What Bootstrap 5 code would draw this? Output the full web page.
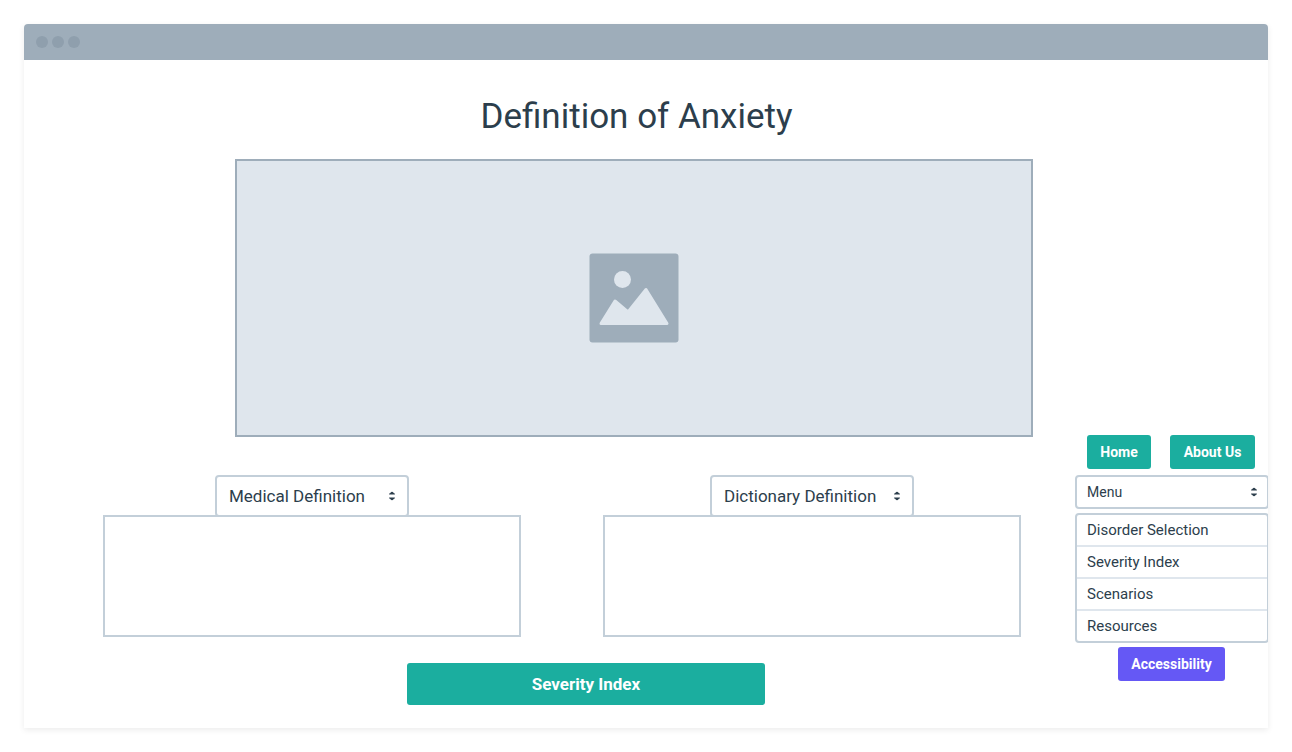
<!DOCTYPE html>
<html lang="en">
<head>
<meta charset="utf-8">
<meta name="viewport" content="width=device-width, initial-scale=1">
<title>Definition of Anxiety</title>
<link href="https://cdn.jsdelivr.net/npm/bootstrap@5.3.0/dist/css/bootstrap.min.css" rel="stylesheet">
<style>
  :root { --ink: #2c3e4c; --slate: #9eadba; --line: #c3cfd9; --teal: #1bae9f; --violet: #6558f5; }
  body { font-family: Roboto, "Liberation Sans", sans-serif; color: var(--ink); background: #fff; }
  .window { min-height: calc(100vh - 48px); border-radius: 4px 4px 0 0; box-shadow: 0 2px 6px rgba(0, 0, 0, .08); }
  .title-bar { height: 36px; padding: 0 12px; gap: 4px; background: var(--slate); }
  .dot { width: 12px; height: 12px; background: #8f9fad; }
  .page-title { font-size: 35px; line-height: 44px; font-weight: 400; padding: 35px 0 0 174px; }
  .hero-row { padding: 20px 42px 0 211px; }
  .hero { height: 278px; border: 2px solid var(--slate); background: #dfe6ed; }
  .definitions { padding: 38px 54px 0 79px; gap: 82px; }
  .definition-box { height: 122px; margin-top: -2px; border: 2px solid var(--line); }
  .picker { border: 2px solid var(--line); border-radius: 4px; color: var(--ink); background-color: #fff;
    background-image: url("data:image/svg+xml,%3Csvg xmlns='http://www.w3.org/2000/svg' viewBox='0 0 16 20'%3E%3Cpath fill='%232c3e4c' stroke='%232c3e4c' stroke-width='2' stroke-linejoin='round' d='M8 2 13 6H3ZM3 14H13L8 18Z'/%3E%3C/svg%3E");
    background-size: 8px 10px; }
  .picker-lg { height: 42px; font-size: 17px; line-height: 24px; padding: 7px 30px 7px 12px; background-position: right 11px center; }
  .picker-sm { width: calc(100% + 1px); height: 34px; font-size: 14px; line-height: 20px; padding: 5px 28px 5px 10px; background-position: right 9px center; }
  .w-medical { width: 194px; }
  .w-dictionary { width: 204px; }
  .action-row { padding: 26px 310px 23px 383px; }
  .solid { --bs-btn-color: #fff; --bs-btn-hover-color: #fff; --bs-btn-border-width: 0; --bs-btn-border-radius: 3px;
    --bs-btn-bg: var(--teal); --bs-btn-hover-bg: #178f83; --bs-btn-active-bg: #178f83; --bs-btn-active-color: #fff;
    --bs-btn-font-size: 14px; --bs-btn-font-weight: 700; --bs-btn-padding-x: 0; --bs-btn-padding-y: 7px; line-height: 20px; }
  .solid-violet { --bs-btn-bg: var(--violet); --bs-btn-hover-bg: #5146d0; --bs-btn-active-bg: #5146d0; }
  .solid-lg { --bs-btn-font-size: 17px; --bs-btn-padding-y: 9px; line-height: 24px; }
  .w-home { width: 64px; } .w-about { width: 85px; } .w-access { width: 107px; }
  /* the menu fields run one pixel under the window's right edge */
  .side { width: 193px; padding-bottom: 47px; }
  .side-buttons { gap: 19px; padding: 0 13px 6px 12px; }
  .menu-list { border: 2px solid var(--line); border-radius: 4px; margin: 4px -1px 4px 0; }
  .menu-list a { color: var(--ink); font-size: 15px; line-height: 20px; padding: 5px 10px; }
  .menu-list li + li { border-top: 2px solid #dfe6ed; }
</style>
</head>
<body>
<div class="window d-flex flex-column m-4 overflow-hidden">
  <header class="title-bar d-flex align-items-center">
    <span class="dot rounded-circle"></span><span class="dot rounded-circle"></span><span class="dot rounded-circle"></span>
  </header>
  <div class="d-flex flex-grow-1">
    <main class="flex-grow-1">
      <h1 class="page-title text-center mb-0">Definition of Anxiety</h1>
      <div class="hero-row">
        <div class="hero d-flex align-items-center justify-content-center">
          <svg width="90" height="90" viewBox="0 0 180 180" role="img" aria-label="Image placeholder">
            <rect x="1" y="1" width="178" height="178" rx="6" fill="#9eadba"/>
            <g fill="#dfe6ed" stroke="#dfe6ed" stroke-linejoin="round">
              <circle cx="67" cy="53" r="17" stroke="none"/>
              <path stroke-width="6" d="M24 141 52 96 78 118 114 73 156 141Z"/>
            </g>
          </svg>
        </div>
      </div>
      <div class="definitions d-flex">
        <section class="flex-fill w-50 d-flex flex-column">
          <select class="form-select picker picker-lg w-medical mx-auto" aria-label="Medical definition"><option>Medical Definition</option></select>
          <div class="definition-box"></div>
        </section>
        <section class="flex-fill w-50 d-flex flex-column">
          <select class="form-select picker picker-lg w-dictionary mx-auto" aria-label="Dictionary definition"><option>Dictionary Definition</option></select>
          <div class="definition-box"></div>
        </section>
      </div>
      <div class="action-row"><button type="button" class="btn solid solid-lg w-100">Severity Index</button></div>
    </main>
    <aside class="side flex-shrink-0 align-self-end d-flex flex-column">
      <div class="side-buttons d-flex">
        <button type="button" class="btn solid w-home">Home</button>
        <button type="button" class="btn solid w-about">About Us</button>
      </div>
      <select class="form-select picker picker-sm" aria-label="Menu"><option>Menu</option></select>
      <ul class="menu-list list-unstyled">
        <li><a class="d-block text-decoration-none" href="#">Disorder Selection</a></li>
        <li><a class="d-block text-decoration-none" href="#">Severity Index</a></li>
        <li><a class="d-block text-decoration-none" href="#">Scenarios</a></li>
        <li><a class="d-block text-decoration-none" href="#">Resources</a></li>
      </ul>
      <button type="button" class="btn solid solid-violet w-access mx-auto">Accessibility</button>
    </aside>
  </div>
</div>
<script src="https://cdn.jsdelivr.net/npm/bootstrap@5.3.0/dist/js/bootstrap.bundle.min.js"></script>
</body>
</html>
